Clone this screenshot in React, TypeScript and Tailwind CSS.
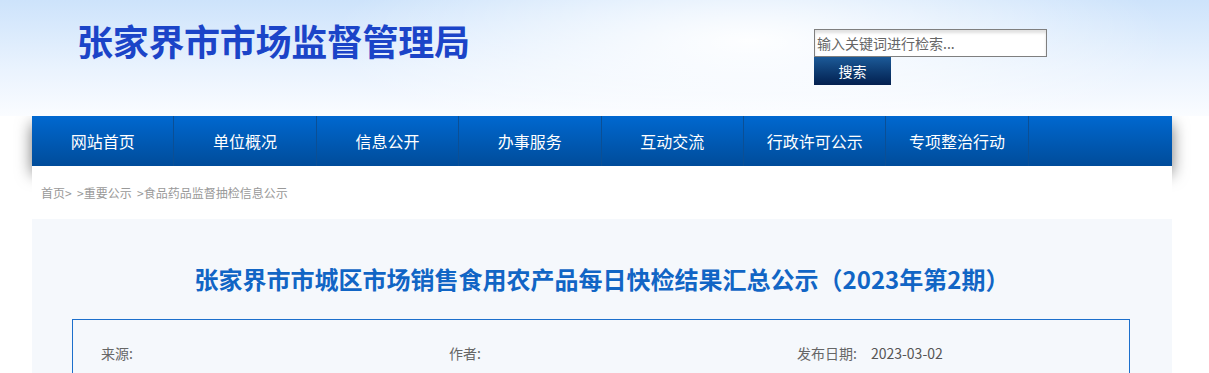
import { useState } from 'react';

const navItems = ['网站首页', '单位概况', '信息公开', '办事服务', '互动交流', '行政许可公示', '专项整治行动'];

export default function App() {
  const [keyword, setKeyword] = useState('');

  return (
    <div className="w-[1209px] min-h-[373px] bg-white font-['Microsoft_YaHei','Noto_Sans_CJK_SC',sans-serif] overflow-hidden">
      {/* header */}
      <div className="relative z-10 h-[116px] bg-[radial-gradient(ellipse_420px_110px_at_62%_35%,rgba(255,255,255,0.95),rgba(255,255,255,0)),linear-gradient(to_bottom,#cde3fb,#eaf3fe_60%,#fafcff)]">
        <div className="ml-[32px] w-[1140px] flex justify-between">
          <h1 className="ml-[45px] mt-[18px] text-[36px] leading-[44px] font-bold tracking-[-0.3px] text-[#1b44c8]">
            张家界市市场监督管理局
          </h1>
          <div className="mr-[125px] mt-[29px] flex flex-col">
            <input
              value={keyword}
              onChange={(e) => setKeyword(e.target.value)}
              placeholder="输入关键词进行检索..."
              className="w-[233px] h-[28px] px-[2px] bg-white border border-[#7f7f7f] shadow-[inset_0_3px_3px_rgba(0,0,0,0.12)] text-[14px] text-[#333] placeholder:text-[#666] outline-none"
            />
            <button className="w-[77px] h-[28px] bg-gradient-to-b from-[#1c5a98] to-[#04204f] text-white text-[14px]">
              搜索
            </button>
          </div>
        </div>
      </div>

      {/* nav */}
      <div className="ml-[32px] w-[1140px] h-[50px] flex bg-gradient-to-b from-[#0068d0] to-[#004c9a] shadow-[0_8px_16px_rgba(0,0,0,0.55)]">
        {navItems.map((item) => (
          <a
            key={item}
            className="w-[142.4px] h-full flex items-center justify-center border-r border-[#0b4f95] text-white text-[16px] cursor-pointer"
          >
            {item}
          </a>
        ))}
      </div>

      {/* breadcrumb */}
      <div className="relative z-10 ml-[32px] w-[1140px] h-[53px] bg-white flex items-center pl-[9px] text-[12px] text-[#999] whitespace-pre">
        {'首页>  >重要公示  >食品药品监督抽检信息公示'}
      </div>

      {/* article */}
      <div className="relative z-10 ml-[32px] w-[1140px] h-[160px] bg-[#f5f8fc] pt-[45px]">
        <h2 className="text-center text-[24px] leading-[30px] font-bold text-[#1165c5]">
          张家界市市城区市场销售食用农产品每日快检结果汇总公示（2023年第2期）
        </h2>
        <div className="ml-[40px] mt-[25px] w-[1058px] h-[80px] border border-[#1c6fcc] flex pl-[28px] pt-[24px] text-[14px] leading-[18px] text-[#666]">
          <div className="w-[348px]">来源:</div>
          <div className="w-[348px]">作者:</div>
          <div>
            发布日期:<span className="ml-[14px] text-[#555]">2023-03-02</span>
          </div>
        </div>
      </div>
    </div>
  );
}
